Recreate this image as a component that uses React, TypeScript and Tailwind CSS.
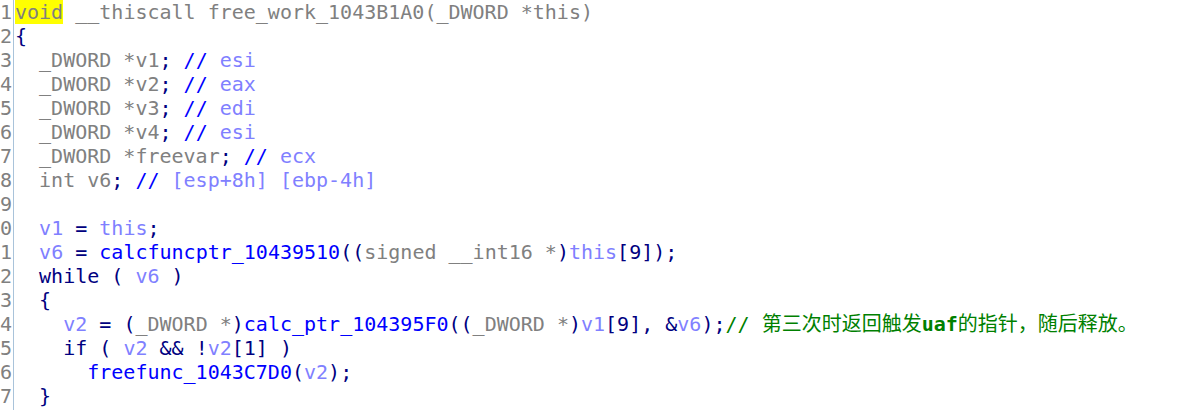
import React from "react";

type Tok = [string, string];

const G = "text-[#808080]"; // declarations / types
const N = "text-[#000080]"; // punctuation
const B = "text-[#0000ff]"; // functions, comment slashes
const V = "text-[#8080ff]"; // variables
const C = "text-[#008000]"; // comment text

const lines: Tok[][] = [
  [["void", "hl"], [" __thiscall free_work_1043B1A0(_DWORD *this)", G]],
  [["{", N]],
  [["  _DWORD *v1", G], [";", N], [" //", B], [" esi", V]],
  [["  _DWORD *v2", G], [";", N], [" //", B], [" eax", V]],
  [["  _DWORD *v3", G], [";", N], [" //", B], [" edi", V]],
  [["  _DWORD *v4", G], [";", N], [" //", B], [" esi", V]],
  [["  _DWORD *freevar", G], [";", N], [" //", B], [" ecx", V]],
  [["  int v6", G], [";", N], [" //", B], [" [esp+8h] [ebp-4h]", V]],
  [],
  [["  ", N], ["v1", V], [" = ", N], ["this", V], [";", N]],
  [
    ["  ", N],
    ["v6", V],
    [" = ", N],
    ["calcfuncptr_10439510", B],
    ["((", N],
    ["signed __int16 *", G],
    [")", N],
    ["this", V],
    ["[9]);", N],
  ],
  [["  while ( ", N], ["v6", V], [" )", N]],
  [["  {", N]],
  [
    ["    ", N],
    ["v2", V],
    [" = (", N],
    ["_DWORD *", G],
    [")", N],
    ["calc_ptr_104395F0", B],
    ["((", N],
    ["_DWORD *", G],
    [")", N],
    ["v1", V],
    ["[9], &", N],
    ["v6", V],
    [");", N],
    ["cjk", C],
  ],
  [["    if ( ", N], ["v2", V], [" && !", N], ["v2", V], ["[1] )", N]],
  [["      ", N], ["freefunc_1043C7D0", B], ["(", N], ["v2", V], [");", N]],
  [["  }", N]],
];

const Comment = () => (
  <span className={C}>
    {"// 第三次时返回触发"}
    <span className="font-bold">uaf</span>
    {"的指针，随后释放。"}
  </span>
);

export default function App() {
  return (
    <div
      className="flex w-[1202px] h-[410px] overflow-hidden bg-white text-[20px] leading-[24px] whitespace-pre"
      style={{ fontFamily: '"DejaVu Sans Mono", "Noto Sans CJK SC", monospace' }}
    >
      <div className="w-[14px] shrink-0 border-r border-[#a9c3da] text-[#808080]">
        {lines.map((_, i) => (
          <div key={i} className="h-[24px] overflow-hidden">
            {String((i + 1) % 10)}
          </div>
        ))}
      </div>
      <div className="pl-[1px]">
        {lines.map((toks, i) => (
          <div key={i} className="h-[24px]">
            {toks.map(([t, cls], j) =>
              cls === "hl" ? (
                <span key={j} className="bg-[#ffff00] text-[#808080]">
                  {t}
                </span>
              ) : t === "cjk" ? (
                <Comment key={j} />
              ) : (
                <span key={j} className={cls}>
                  {t}
                </span>
              )
            )}
          </div>
        ))}
      </div>
    </div>
  );
}
